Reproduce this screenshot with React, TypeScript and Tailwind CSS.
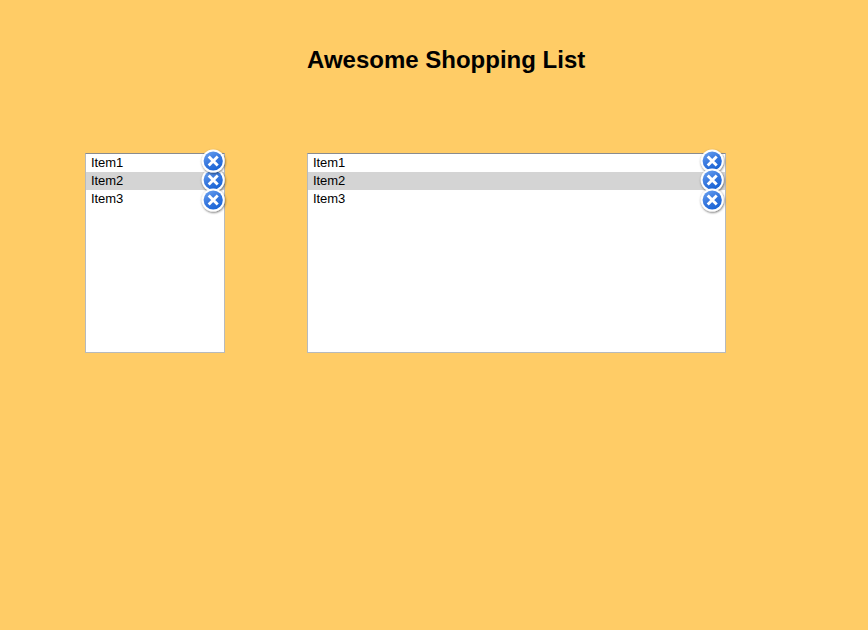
type ListProps = { className: string; closePositions: string[] };

const items = ['Item1', 'Item2', 'Item3'];

function CloseIcon({ id }: { id: string }) {
  return (
    <svg viewBox="0 0 30 30" className="block h-[30px] w-[30px]">
      <defs>
        <linearGradient id={id} x1="0.1" y1="0" x2="0.7" y2="1">
          <stop offset="0" stopColor="#6ba2f0" />
          <stop offset="0.5" stopColor="#3a79de" />
          <stop offset="1" stopColor="#1763d6" />
        </linearGradient>
        <filter id={`${id}-shadow`} x="-20%" y="-20%" width="150%" height="150%">
          <feDropShadow dx="0.5" dy="1" stdDeviation="1.1" floodColor="#000" floodOpacity="0.6" />
        </filter>
      </defs>
      <circle cx="15.2" cy="15" r="11.5" fill="#fff" filter={`url(#${id}-shadow)`} />
      <circle cx="15.2" cy="15" r="9.6" fill={`url(#${id})`} />
      <path d="M10.7 10.5l9 9M19.7 10.5l-9 9" stroke="#fff" strokeWidth="2.9" strokeLinecap="butt" />
    </svg>
  );
}

function ShoppingList({ className, closePositions, name }: ListProps & { name: string }) {
  return (
    <div className={`relative h-[200px] border border-[#b7babc] border-t-[#8a8c8e] bg-white ${className}`}>
      <ul>
        {items.map((item, i) => (
          <li
            key={item}
            className={`h-[18px] pl-[5px] text-[13px] leading-[18px] tracking-[-0.1px] ${i === 1 ? 'bg-[#d4d4d4]' : ''}`}
          >
            {item}
          </li>
        ))}
      </ul>
      {closePositions.map((position, i) => (
        <button key={position} aria-label={`Remove ${items[i]}`} className={`absolute ${position}`}>
          <CloseIcon id={`${name}-${i}`} />
        </button>
      ))}
    </div>
  );
}

export default function App() {
  return (
    <main className="h-[630px] w-[868px] overflow-hidden bg-[#ffcc66] pt-[42px] font-['Liberation_Sans',Arial,sans-serif] text-black">
      <h1 className="pl-[307px] text-[24px] leading-9 font-bold">Awesome Shopping List</h1>
      <div className="flex gap-[82px] pt-[75px] pl-[85px]">
        <ShoppingList
          name="small"
          className="w-[140px]"
          closePositions={[
            'left-[112px] top-[-8px] z-10',
            'left-[112px] top-[11px]',
            'left-[112px] top-[31px] z-10',
          ]}
        />
        <ShoppingList
          name="large"
          className="w-[419px]"
          closePositions={[
            'left-[389px] top-[-8px]',
            'left-[389px] top-[11px]',
            'left-[389px] top-[31px]',
          ]}
        />
      </div>
    </main>
  );
}
